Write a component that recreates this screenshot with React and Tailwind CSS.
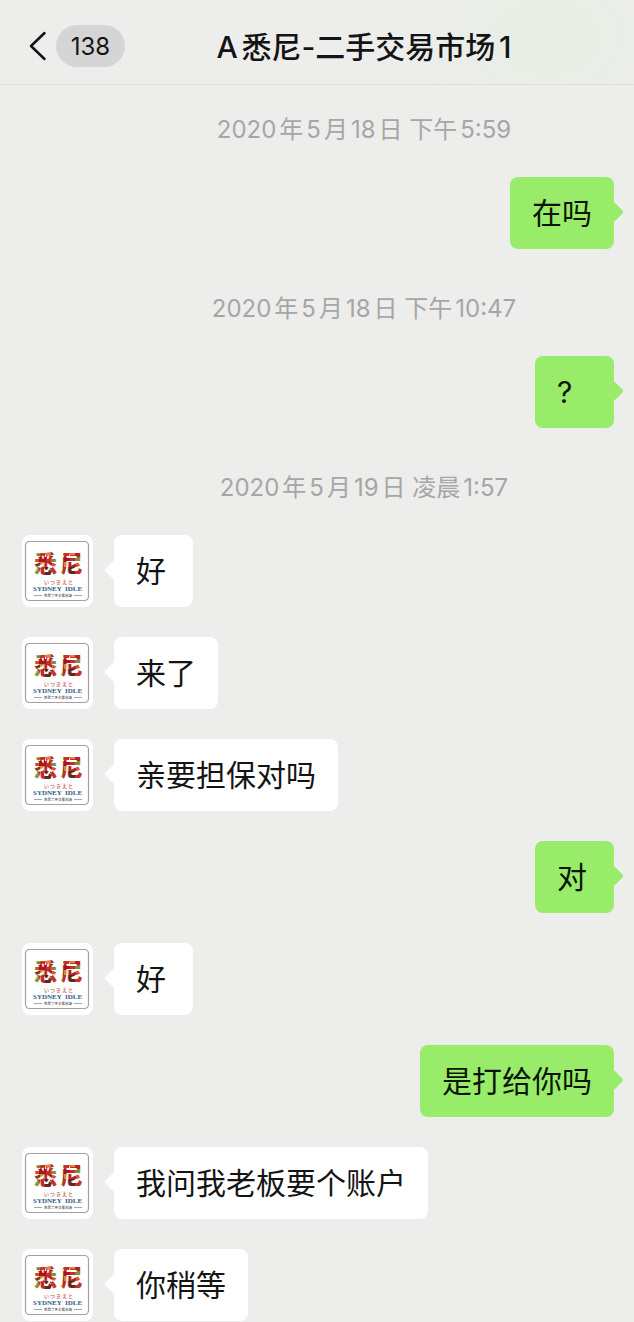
const conversation = [
  { id: 1, kind: 'time', text: '2020年5月18日 下午5:59' },
  { id: 2, kind: 'sent', text: '在吗' },
  { id: 3, kind: 'time', text: '2020年5月18日 下午10:47' },
  { id: 4, kind: 'sent', text: '?' },
  { id: 5, kind: 'time', text: '2020年5月19日 凌晨1:57' },
  { id: 6, kind: 'received', text: '好' },
  { id: 7, kind: 'received', text: '来了' },
  { id: 8, kind: 'received', text: '亲要担保对吗' },
  { id: 9, kind: 'sent', text: '对' },
  { id: 10, kind: 'received', text: '好' },
  { id: 11, kind: 'sent', text: '是打给你吗' },
  { id: 12, kind: 'received', text: '我问我老板要个账户' },
  { id: 13, kind: 'received', text: '你稍等' },
]

// Coloured tiles that fill the two big characters of the shop logo
const tiles = [
  [0, 0, 6, 5, '#6f8a3a'], [6, 0, 5, 6, '#c9302a'], [11, 0, 6, 4, '#d9863c'], [17, 0, 7, 6, '#b3202a'],
  [0, 5, 5, 6, '#d8442f'], [5, 6, 7, 5, '#a5161f'], [12, 4, 5, 7, '#d02a28'], [17, 6, 7, 5, '#7b8f3f'],
  [0, 11, 6, 6, '#7a3b22'], [6, 11, 5, 5, '#c98a3a'], [11, 11, 7, 5, '#b81f26'], [18, 11, 6, 6, '#d9532f'],
  [0, 17, 5, 7, '#7e9a3c'], [5, 16, 6, 8, '#c4252b'], [11, 16, 6, 8, '#5a2a1c'], [17, 17, 7, 7, '#c2332c'],
]

function Avatar({ id }) {
  const fill = `tiles-${id}`
  return (
    <div className="w-[71px] h-[72px] shrink-0 rounded-lg bg-white">
      <svg viewBox="0 0 71 72" className="block w-full h-full" role="img" aria-label="悉尼 Sydney Idle">
        <defs>
          <pattern id={fill} x="12" y="16" width="24" height="24" patternUnits="userSpaceOnUse">
            {tiles.map(([x, y, w, h, color]) => (
              <rect key={`${x}-${y}`} x={x} y={y} width={w} height={h} fill={color} />
            ))}
          </pattern>
        </defs>
        <rect x="3.5" y="6.5" width="63" height="59" rx="4" fill="none" stroke="#a89da1" strokeWidth="1.2" />
        <g fontFamily="'Noto Sans CJK SC', sans-serif" fontWeight="900" fontSize="23">
          <text x="12" y="37" fill={`url(#${fill})`}>悉</text>
          <text x="38" y="37" fill={`url(#${fill})`}>尼</text>
        </g>
        <text x="22 28 34 40 46" y="49" fontFamily="'Noto Sans CJK JP', sans-serif" fontSize="5" fontWeight="500" fill="#c8584f">
          いつきえと
        </text>
        <g fontFamily="'Liberation Serif', serif" fontSize="7" fontWeight="700" fill="#2d5b87">
          <text x="11" y="56">SYDNEY</text>
          <text x="43" y="56">IDLE</text>
        </g>
        <path d="M12 60.5h8M52 60.5h8" stroke="#6f8799" strokeWidth="0.7" />
        <text x="36" y="62" textAnchor="middle" fontFamily="'Noto Sans CJK SC', sans-serif" fontSize="3.5" fontWeight="500" fill="#4a4a52">
          悉尼二手交易市场
        </text>
      </svg>
    </div>
  )
}

function Message({ message }) {
  if (message.kind === 'sent') {
    return (
      <li className="flex justify-end pr-5">
        <div className="relative min-w-[79px] rounded-lg bg-[#98ec6a] px-[22px] py-3.5 text-[30px] leading-[44px] text-[#0c1607]">
          <span className="absolute top-7 -right-[7px] w-3.5 h-3.5 rotate-45 rounded-xs bg-[#98ec6a]"></span>
          <p className="relative">{message.text}</p>
        </div>
      </li>
    )
  }

  return (
    <li className="flex gap-[21px] pl-[22px] pr-5">
      <Avatar id={message.id} />
      <div className="relative min-w-[79px] rounded-lg bg-white px-[22px] py-3.5 text-[30px] leading-[44px] text-[#141414]">
        <span className="absolute top-7 -left-[7px] w-3.5 h-3.5 rotate-45 rounded-xs bg-white"></span>
        <p className="relative">{message.text}</p>
      </div>
    </li>
  )
}

export default function App() {
  return (
    <div className="min-h-screen bg-[#ededec] font-[Inter,'Noto_Sans_CJK_SC',sans-serif] [text-autospace:normal]" lang="zh-CN">
      <header className="flex items-center h-[85px] pt-2 pl-7 pr-[31px] border-b border-[#dededd] bg-[radial-gradient(ellipse_130px_90px_at_86%_45%,#e7eee1,#ededec)]">
        <button type="button" aria-label="返回" className="flex items-center gap-2 text-[#141414]">
          <svg viewBox="0 0 20 32" className="w-5 h-8" fill="none" stroke="currentColor" strokeWidth="2.5" strokeLinecap="round" strokeLinejoin="round">
            <path d="M16.5 3 3 16l13.5 13" />
          </svg>
          <span className="w-[69px] h-[42px] rounded-full bg-[#d5d5d5] text-center text-2xl leading-[44px]">138</span>
        </button>
        <h1 className="flex-1 pt-0.5 text-center text-[30px] leading-10 font-medium whitespace-nowrap text-[#141414]">
          A悉尼-二手交易市场1
        </h1>
      </header>

      <main className="pt-[15px]">
        <ul className="flex flex-col gap-[30px]">
          {conversation.map((item) =>
            item.kind === 'time' ? (
              <li key={item.id} className="pt-3 pl-[94px] text-center text-2xl leading-[35px] text-[#a6a6a6]">
                <time>{item.text}</time>
              </li>
            ) : (
              <Message key={item.id} message={item} />
            )
          )}
        </ul>
      </main>
    </div>
  )
}
